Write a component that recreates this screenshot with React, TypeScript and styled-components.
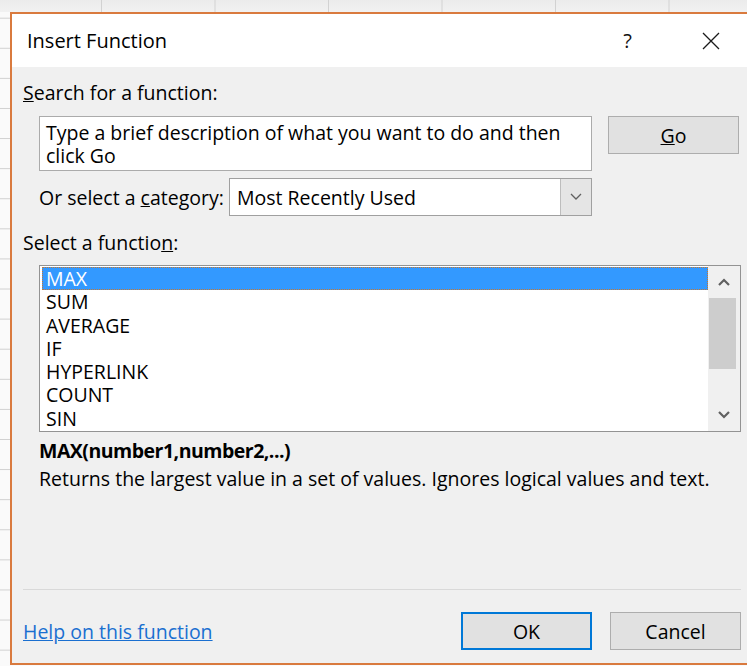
import styled, { createGlobalStyle } from "styled-components";

const FUNCTIONS = ["MAX", "SUM", "AVERAGE", "IF", "HYPERLINK", "COUNT", "SIN"];

const GlobalStyle = createGlobalStyle`
  html, body {
    margin: 0;
    padding: 0;
    background: #fff;
  }
  body {
    overflow: hidden;
    font-family: "Open Sans", "Noto Sans", sans-serif;
  }
`;

const Screen = styled.div`
  width: 747px;
  height: 666px;
  overflow: hidden;
  box-sizing: border-box;
  padding: 12px 0 0 10px;
  background-color: #fafafa;
  background-image: linear-gradient(90deg, #d2d2d2 1px, transparent 1px),
    linear-gradient(#d0d0d0 1px, transparent 1px),
    linear-gradient(#ebebeb, #f1f1f1);
  background-size: 113.5px 12px, 10px 30.1px, 100% 12px;
  background-position: 101px 0, 0 17.7px, 0 0;
  background-repeat: repeat-x, repeat-y, no-repeat;
`;

const Dialog = styled.div`
  width: 760px;
  height: 653px;
  box-sizing: border-box;
  border: 2px solid #d97a3e;
  border-right: none;
  background: #f0f0f0;
  display: flex;
  flex-direction: column;
  color: #000;
  font-size: 19.5px;
  line-height: 23px;
`;

const TitleBar = styled.div`
  height: 53px;
  flex: none;
  background: #fff;
  display: flex;
  align-items: center;
  padding: 0 18px 0 15px;
`;

const Title = styled.span`
  flex: 1;
  font-size: 20px;
  color: #000;
`;

const CaptionButton = styled.div`
  width: 83px;
  height: 53px;
  display: flex;
  align-items: center;
  justify-content: center;
  font-size: 20px;
  color: #111;
`;

const Body = styled.div`
  flex: 1;
  display: flex;
  flex-direction: column;
  padding: 14px 29px 13px 11px;
`;

const SectionLabel = styled.div<{ $top?: number }>`
  margin-top: ${({ $top }) => $top ?? 0}px;
  height: 23px;
`;

const SearchRow = styled.div`
  margin-top: 12px;
  padding-left: 16px;
  display: flex;
  align-items: flex-start;
  gap: 16px;
`;

const SearchBox = styled.div`
  width: 553px;
  height: 55px;
  box-sizing: border-box;
  border: 1px solid #ababab;
  background: #fff;
  padding: 4px 6px;
`;

const PushButton = styled.div<{ $default?: boolean }>`
  width: 131px;
  height: 38px;
  box-sizing: border-box;
  display: flex;
  align-items: center;
  justify-content: center;
  background: #e1e1e1;
  border: ${({ $default }) =>
    $default ? "2px solid #0078d7" : "1px solid #adadad"};
`;

const CategoryRow = styled.div`
  margin-top: 7px;
  padding-left: 16px;
  height: 38px;
  display: flex;
  align-items: center;
`;

const CategoryLabel = styled.span`
  width: 190px;
`;

const Select = styled.div`
  width: 363px;
  height: 38px;
  box-sizing: border-box;
  border: 1px solid #a0a0a0;
  background: #fff;
  display: flex;
`;

const SelectValue = styled.span`
  flex: 1;
  display: flex;
  align-items: center;
  padding-left: 7px;
`;

const DropButton = styled.span`
  width: 30px;
  background: #e5e5e5;
  border-left: 1px solid #bdbdbd;
  display: flex;
  align-items: center;
  justify-content: center;
`;

const ListBox = styled.div`
  margin: 11px 0 0 16px;
  height: 167px;
  box-sizing: border-box;
  border: 1px solid #939393;
  background: #fff;
  display: flex;
`;

const Items = styled.div`
  flex: 1;
  padding: 1px 0 0 2px;
`;

const Item = styled.div<{ $selected?: boolean }>`
  height: 23.25px;
  line-height: 23.25px;
  padding-left: 4px;
  background: ${({ $selected }) => ($selected ? "#3399ff" : "transparent")};
  color: ${({ $selected }) => ($selected ? "#fff" : "#000")};
  outline: ${({ $selected }) => ($selected ? "1px dotted #c9772e" : "none")};
  outline-offset: -1px;
`;

const ScrollBar = styled.div`
  width: 32px;
  background: #f0f0f0;
  display: flex;
  flex-direction: column;
`;

const ScrollArrow = styled.div`
  height: 32px;
  display: flex;
  align-items: center;
  justify-content: center;
`;

const Thumb = styled.div`
  height: 71px;
  width: 27px;
  margin-left: 1px;
  background: #cdcdcd;
`;

const Track = styled.div`
  flex: 1;
`;

const Syntax = styled.div`
  margin: 7px 0 0 16px;
  font-weight: 700;
  letter-spacing: -0.5px;
`;

const Description = styled.div`
  margin: 5px 0 0 16px;
`;

const Spacer = styled.div`
  flex: 1;
`;

const Separator = styled.div`
  height: 1px;
  background: #d9d9d9;
`;

const Footer = styled.div`
  margin-top: 22px;
  height: 38px;
  display: flex;
  align-items: center;
  gap: 18px;
`;

const HelpLink = styled.a`
  flex: 1;
  color: #1a6fd0;
  text-decoration: underline;
  cursor: pointer;
`;

const CloseIcon = () => (
  <svg width="18" height="18" viewBox="0 0 18 18">
    <path d="M1 1 L17 17 M17 1 L1 17" stroke="#1a1a1a" strokeWidth="1.3" fill="none" />
  </svg>
);

const Chevron = ({ up, bold }: { up?: boolean; bold?: boolean }) => (
  <svg width="12" height="8" viewBox="0 0 12 8">
    <path
      d={up ? "M1 7 L6 2 L11 7" : "M1 1 L6 6 L11 1"}
      stroke="#606060"
      strokeWidth={bold ? 2.2 : 1.3}
      fill="none"
    />
  </svg>
);

const App = () => {
  return (
    <>
      <GlobalStyle />
      <Screen>
        <Dialog>
          <TitleBar>
            <Title>Insert Function</Title>
            <CaptionButton>?</CaptionButton>
            <CaptionButton>
              <CloseIcon />
            </CaptionButton>
          </TitleBar>
          <Body>
            <SectionLabel>
              <u>S</u>earch for a function:
            </SectionLabel>
            <SearchRow>
              <SearchBox>
                Type a brief description of what you want to do and then click Go
              </SearchBox>
              <PushButton>
                <u>G</u>o
              </PushButton>
            </SearchRow>
            <CategoryRow>
              <CategoryLabel>
                Or select a <u>c</u>ategory:
              </CategoryLabel>
              <Select>
                <SelectValue>Most Recently Used</SelectValue>
                <DropButton>
                  <Chevron />
                </DropButton>
              </Select>
            </CategoryRow>
            <SectionLabel $top={15}>
              Select a functio<u>n</u>:
            </SectionLabel>
            <ListBox>
              <Items>
                {FUNCTIONS.map((name, i) => (
                  <Item key={name} $selected={i === 0}>
                    {name}
                  </Item>
                ))}
              </Items>
              <ScrollBar>
                <ScrollArrow>
                  <Chevron up bold />
                </ScrollArrow>
                <Thumb />
                <Track />
                <ScrollArrow>
                  <Chevron bold />
                </ScrollArrow>
              </ScrollBar>
            </ListBox>
            <Syntax>MAX(number1,number2,...)</Syntax>
            <Description>
              Returns the largest value in a set of values. Ignores logical values and text.
            </Description>
            <Spacer />
            <Separator />
            <Footer>
              <HelpLink>Help on this function</HelpLink>
              <PushButton $default>OK</PushButton>
              <PushButton>Cancel</PushButton>
            </Footer>
          </Body>
        </Dialog>
      </Screen>
    </>
  );
};

export default App;
